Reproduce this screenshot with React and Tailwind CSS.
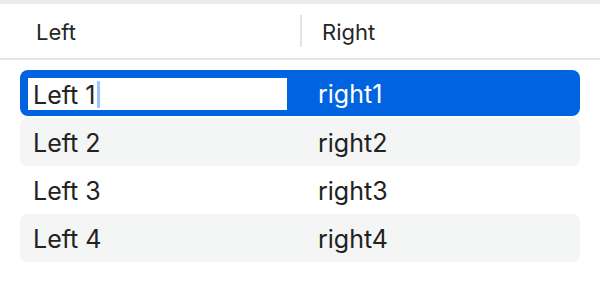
export default function App() {
  const font = { fontFamily: "Inter, 'Noto Sans', sans-serif" };
  const rows = [
    { l: "Left 2", r: "right2", bg: "bg-[#f4f5f5]" },
    { l: "Left 3", r: "right3", bg: "bg-white" },
    { l: "Left 4", r: "right4", bg: "bg-[#f4f5f5]" },
  ];
  return (
    <div className="w-[600px] h-[296px] bg-white flex flex-col" style={font}>
      <div className="h-[4px] bg-[#ececec]" />
      <div className="h-[56px] flex items-center border-b-2 border-[#e6e6e6] text-[22px] text-[#262626]">
        <div className="w-[300px] pl-[36px] pt-[3px]">Left</div>
        <div className="w-[2px] h-[32px] bg-[#e3e3e3]" />
        <div className="pl-[20px] pt-[3px]">Right</div>
      </div>
      <div className="px-[20px] pt-[10px] flex flex-col text-[25px] text-[#222222]">
        <div className="h-[46px] mb-[2px] rounded-[8px] bg-[#0064e1] flex items-center">
          <div className="ml-[8px] mt-[2px] w-[259px] h-[32px] bg-white flex items-center pl-[5px]">
            <span className="leading-none pt-[3px]">Left 1</span>
            <span className="ml-[1px] w-[3px] h-[27px] bg-[#9cc2ff] rounded-[1px]" />
          </div>
          <div className="pl-[31px] pt-[4px] text-white">right1</div>
        </div>
        {rows.map((row) => (
          <div key={row.l} className={`h-[48px] rounded-[8px] flex items-center pt-[3px] ${row.bg}`}>
            <div className="w-[298px] pl-[13px]">{row.l}</div>
            <div>{row.r}</div>
          </div>
        ))}
      </div>
    </div>
  );
}
